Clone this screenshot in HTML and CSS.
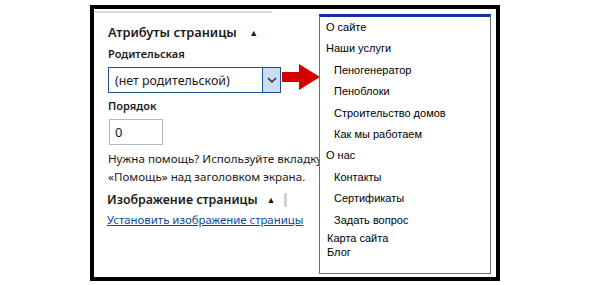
FILE: index.html
```html
<!DOCTYPE html>
<html lang="ru">
<head>
<meta charset="utf-8">
<link rel="stylesheet" href="styles.css">
</head>
<body>
<div class="frame">
  <div class="topline"></div>
  <div class="content">
    <div class="box-head">Атрибуты страницы <span class="tri">▲</span></div>
    <div class="label">Родительская</div>
    <div class="select">
      <span class="select-text">(нет родительской)</span>
      <span class="select-btn">
        <svg width="10" height="6" viewBox="0 0 10 6"><path d="M1 1 L5 5 L9 1" fill="none" stroke="#222" stroke-width="1.4"/></svg>
      </span>
    </div>
    <div class="label label-order">Порядок</div>
    <div class="input">0</div>
    <p class="help">Нужна помощь? Используйте вкладку<br>«Помощь» над заголовком экрана.</p>
    <div class="box-head box-head2">Изображение страницы <span class="tri">▲</span><span class="bar"></span></div>
    <a class="link" href="#">Установить изображение страницы</a>
  </div>
  <svg class="arrow" width="40" height="30" viewBox="0 0 40 30">
    <polygon points="0,9 17,9 17,1 38,14 17,27 17,19 0,19" fill="#d40000"/>
  </svg>
  <ul class="menu">
    <li>О сайте</li>
    <li>Наши услуги</li>
    <li class="sub">Пеногенератор</li>
    <li class="sub">Пеноблоки</li>
    <li class="sub">Строительство домов</li>
    <li class="sub">Как мы работаем</li>
    <li>О нас</li>
    <li class="sub">Контакты</li>
    <li class="sub">Сертификаты</li>
    <li class="sub">Задать вопрос</li>
    <li class="tight">Карта сайта</li>
    <li class="tight">Блог</li>
  </ul>
</div>
</body>
</html>
```
FILE: styles.css
```css
html, body {
  margin: 0;
  padding: 0;
  background: #fff;
}
.frame {
  position: relative;
  margin: 5px 0 0 90px;
  width: 402px;
  height: 268px;
  border: 4px solid #000;
  overflow: hidden;
}
.topline {
  height: 2px;
  margin: 2px 0 0 1px;
  width: 177px;
  background: #d8d8d8;
}
.content {
  padding: 9px 0 0 14px;
  font-family: "Noto Sans", sans-serif;
  color: #1a1a1a;
  white-space: nowrap;
}
.box-head {
  font-size: 12.8px;
  font-weight: 600;
  line-height: 20px;
  height: 20px;
}
.tri {
  font-size: 9px;
  margin-left: 9px;
  vertical-align: 1px;
}
.label {
  font-size: 11px;
  font-weight: 600;
  line-height: 16px;
  margin-top: 4px;
}
.select {
  margin-top: 5px;
  width: 173px;
  border: 1px solid #1f4e95;
  display: flex;
  align-items: center;
  box-sizing: border-box;
  height: 26px;
}
.select-text {
  flex: 1;
  padding-left: 6px;
  font-size: 12.4px;
}
.select-btn {
  width: 17px;
  height: 24px;
  background: #c9def3;
  border-left: 1px solid #1f4e95;
  display: flex;
  align-items: center;
  justify-content: center;
}
.label-order {
  margin-top: 5px;
}
.input {
  margin: 5px 0 0 1px;
  width: 54px;
  height: 26px;
  box-sizing: border-box;
  border: 1px solid #b9b9b9;
  font-size: 13px;
  line-height: 24px;
  padding-left: 5px;
}
.help {
  margin: 5px 0 0;
  font-size: 11.6px;
  line-height: 18px;
}
.box-head2 {
  margin-top: 4px;
  display: flex;
  align-items: center;
  margin-left: -1px;
  font-size: 12.4px;
}
.box-head2 .tri {
  margin-left: 9px;
  vertical-align: 0;
}
.bar {
  width: 3px;
  height: 14px;
  background: #d0d0d0;
  margin-left: 8px;
}
.link {
  display: block;
  margin: 1px 0 0 -1px;
  font-size: 11.4px;
  line-height: 18px;
  color: #0b4a96;
}
.arrow {
  position: absolute;
  left: 188px;
  top: 54px;
}
.menu {
  position: absolute;
  left: 225px;
  top: 5px;
  width: 170px;
  height: 256px;
  margin: 0;
  padding: 0;
  list-style: none;
  background: #fff;
  border: 1px solid #6e6e6e;
  border-top: 3px solid #0f2fa6;
  font-family: "Liberation Sans", sans-serif;
  font-size: 11px;
  color: #000;
}
.menu li {
  height: 21.4px;
  line-height: 21.4px;
  padding-left: 6px;
}
.menu li.sub {
  padding-left: 14px;
}
.menu li.tight {
  padding-left: 7px;
  height: 14px;
  line-height: 14px;
}
```
